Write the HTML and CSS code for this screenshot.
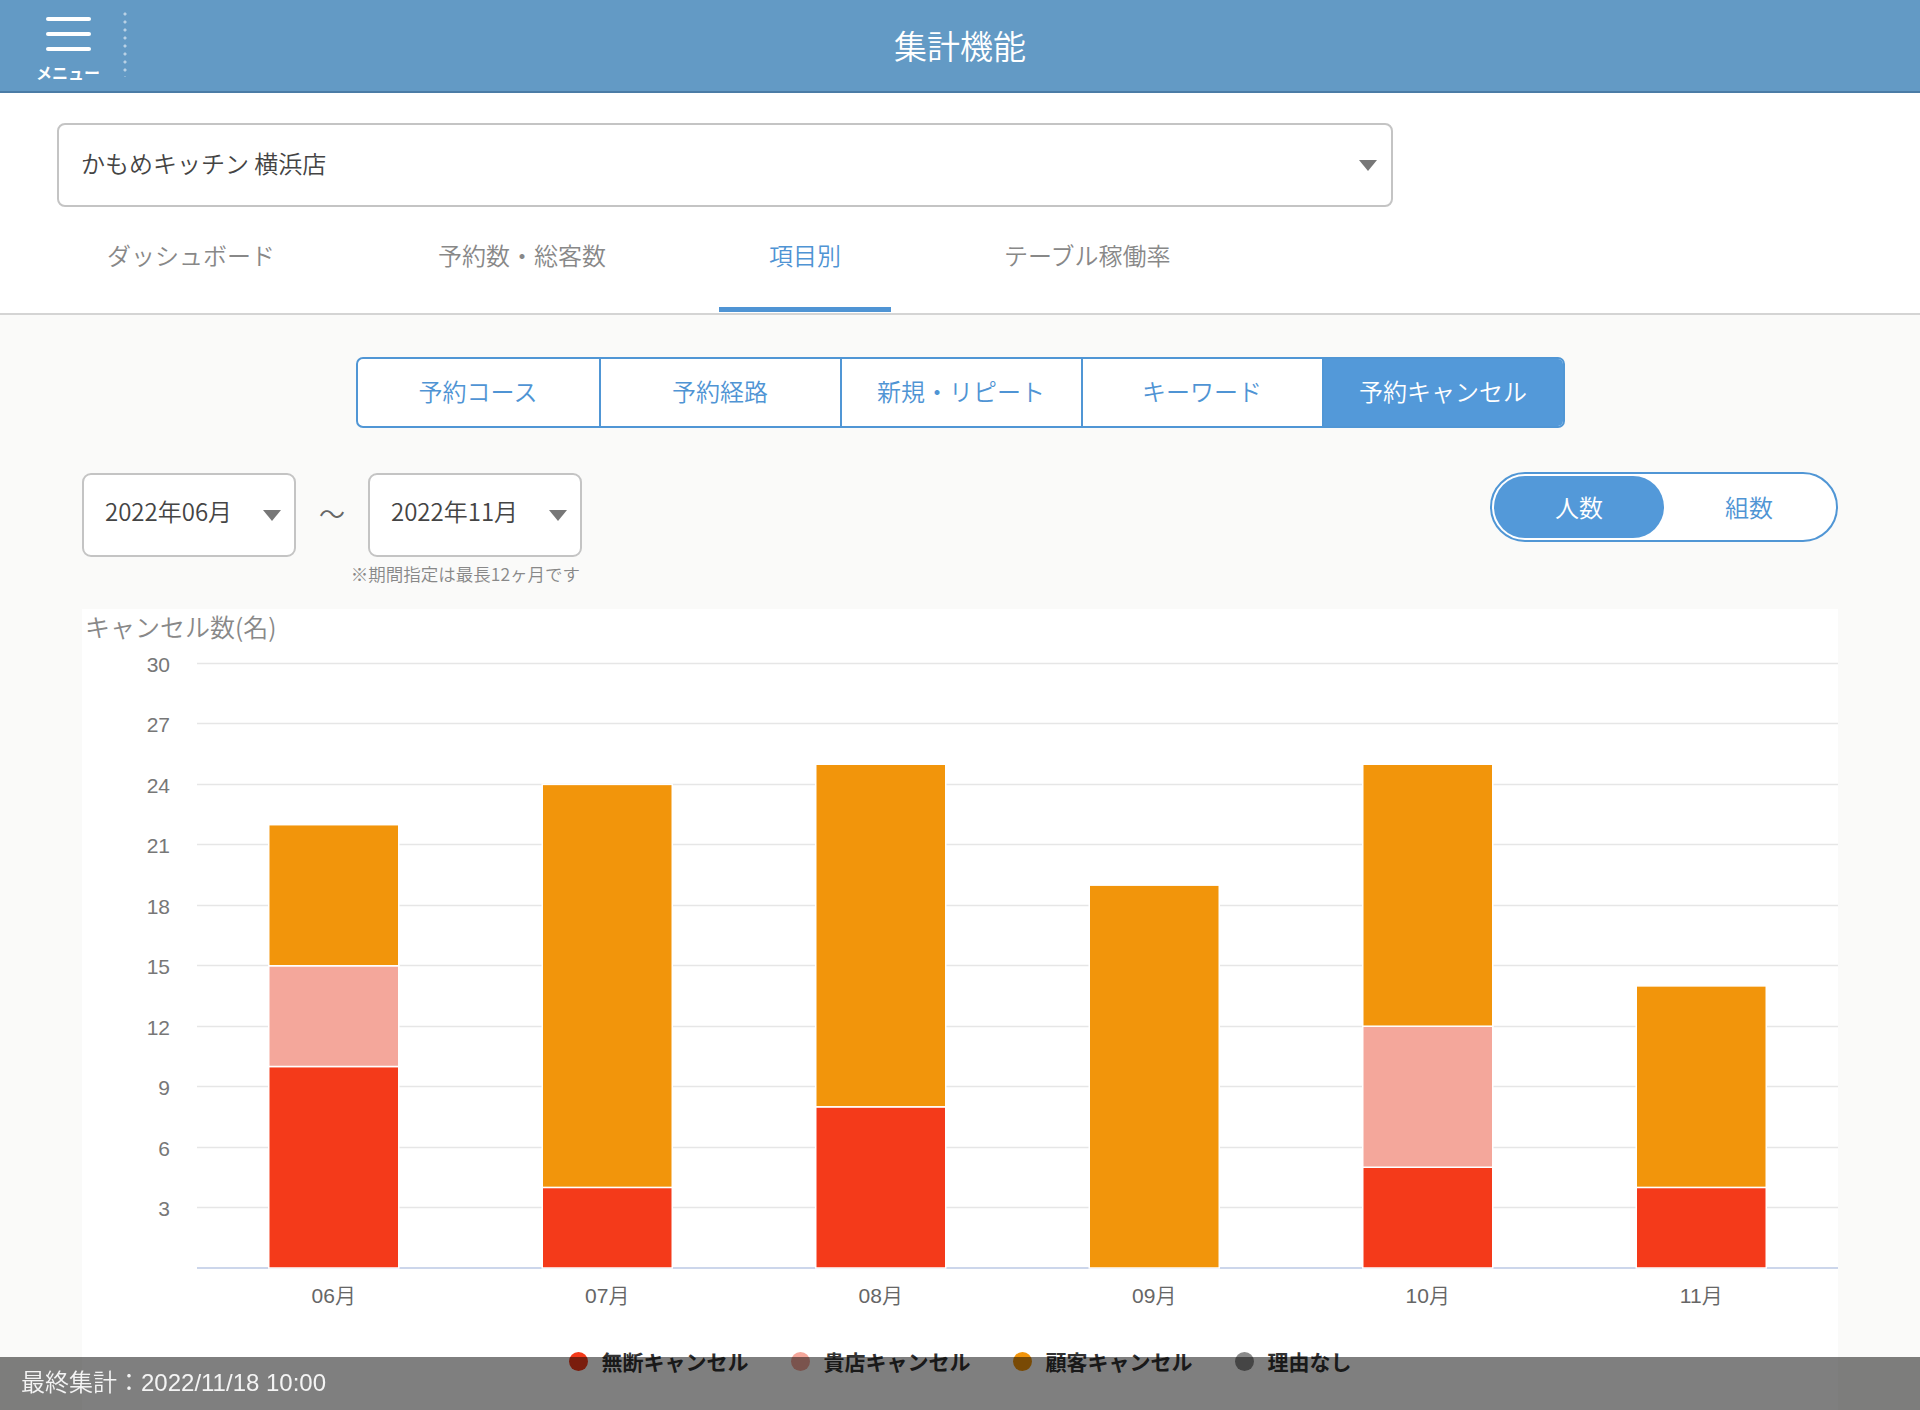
FILE: index.html
```html
<!DOCTYPE html>
<html lang="ja">
<head>
<meta charset="utf-8">
<title>集計機能</title>
<link rel="stylesheet" href="styles.css">
</head>
<body>
<header class="topbar">
  <div class="topbar-left">
    <div class="menu">
      <span class="burger"><i></i><i></i><i></i></span>
      <span class="menu-label">メニュー</span>
    </div>
    <div class="divider"></div>
  </div>
  <h1 class="title">集計機能</h1>
  <div></div>
</header>

<section class="top">
  <div class="store">
    <span>かもめキッチン 横浜店</span>
    <span class="caret"></span>
  </div>
  <nav class="tabs">
    <div class="tab">ダッシュボード</div>
    <div class="tab">予約数・総客数</div>
    <div class="tab active">項目別</div>
    <div class="tab">テーブル稼働率</div>
  </nav>
</section>

<main class="main">
  <div class="segments">
    <div class="seg">予約コース</div>
    <div class="seg">予約経路</div>
    <div class="seg">新規・リピート</div>
    <div class="seg">キーワード</div>
    <div class="seg active">予約キャンセル</div>
  </div>

  <div class="controls">
    <div class="range">
      <div class="range-row">
        <div class="date"><span>2022年06月</span><span class="caret"></span></div>
        <div class="tilde">〜</div>
        <div class="date"><span>2022年11月</span><span class="caret"></span></div>
      </div>
      <div class="note">※期間指定は最長12ヶ月です</div>
    </div>
    <div class="toggle">
      <span class="on">人数</span>
      <span>組数</span>
    </div>
  </div>

  <div class="chart">
    <svg class="plot" width="1756" height="730" viewBox="0 0 1756 730">
      <text class="ytitle" x="3" y="28">キャンセル数(名)</text>
      <g class="grid">
        <line x1="115" x2="1756" y1="54.5" y2="54.5"/>
        <line x1="115" x2="1756" y1="114.5" y2="114.5"/>
        <line x1="115" x2="1756" y1="175.5" y2="175.5"/>
        <line x1="115" x2="1756" y1="235.5" y2="235.5"/>
        <line x1="115" x2="1756" y1="296.5" y2="296.5"/>
        <line x1="115" x2="1756" y1="356.5" y2="356.5"/>
        <line x1="115" x2="1756" y1="417.5" y2="417.5"/>
        <line x1="115" x2="1756" y1="477.5" y2="477.5"/>
        <line x1="115" x2="1756" y1="538.5" y2="538.5"/>
        <line x1="115" x2="1756" y1="598.5" y2="598.5"/>
      </g>
      <g class="ylab">
        <text x="88" y="63">30</text>
        <text x="88" y="123">27</text>
        <text x="88" y="184">24</text>
        <text x="88" y="244">21</text>
        <text x="88" y="305">18</text>
        <text x="88" y="365">15</text>
        <text x="88" y="426">12</text>
        <text x="88" y="486">9</text>
        <text x="88" y="547">6</text>
        <text x="88" y="607">3</text>
      </g>
      <line class="axis" x1="115" x2="1756" y1="659" y2="659"/>
      <g class="bars">
        <rect class="c-red" x="186.75" y="457.5" width="130" height="201.5"/>
        <rect class="c-pink" x="186.75" y="356.75" width="130" height="100.75"/>
        <rect class="c-orange" x="186.75" y="215.7" width="130" height="141.05"/>

        <rect class="c-red" x="460.25" y="578.4" width="130" height="80.6"/>
        <rect class="c-orange" x="460.25" y="175.4" width="130" height="403"/>

        <rect class="c-red" x="733.75" y="497.8" width="130" height="161.2"/>
        <rect class="c-orange" x="733.75" y="155.25" width="130" height="342.55"/>

        <rect class="c-orange" x="1007.25" y="276.15" width="130" height="382.85"/>

        <rect class="c-red" x="1280.75" y="558.25" width="130" height="100.75"/>
        <rect class="c-pink" x="1280.75" y="417.2" width="130" height="141.05"/>
        <rect class="c-orange" x="1280.75" y="155.25" width="130" height="261.95"/>

        <rect class="c-red" x="1554.25" y="578.4" width="130" height="80.6"/>
        <rect class="c-orange" x="1554.25" y="376.9" width="130" height="201.5"/>
      </g>
      <g class="xlab">
        <text x="251.75" y="694">06月</text>
        <text x="525.25" y="694">07月</text>
        <text x="798.75" y="694">08月</text>
        <text x="1072.25" y="694">09月</text>
        <text x="1345.75" y="694">10月</text>
        <text x="1619.25" y="694">11月</text>
      </g>
    </svg>
    <div class="legend">
      <div class="legend-item"><span class="dot d-red"></span>無断キャンセル</div>
      <div class="legend-item"><span class="dot d-pink"></span>貴店キャンセル</div>
      <div class="legend-item"><span class="dot d-orange"></span>顧客キャンセル</div>
      <div class="legend-item"><span class="dot d-gray"></span>理由なし</div>
    </div>
  </div>
</main>

<footer class="footer">最終集計：2022/11/18 10:00</footer>
</body>
</html>
```

FILE: styles.css
```css
html, body {
  margin: 0;
  padding: 0;
}
body {
  background: #fafaf9;
  font-family: "Noto Sans CJK JP", "Noto Sans", sans-serif;
  font-weight: 350;
  color: #444;
  overflow: hidden;
}

/* header */
.topbar {
  display: grid;
  grid-template-columns: 1fr auto 1fr;
  align-items: center;
  height: 91px;
  background: #639ac5;
  border-bottom: 2px solid #4b7ca6;
  color: #fff;
}
.topbar-left {
  display: flex;
  align-items: flex-start;
  height: 100%;
}
.menu {
  margin-left: 33px;
  width: 70px;
  padding-top: 17px;
  display: flex;
  flex-direction: column;
  align-items: center;
}
.burger {
  display: flex;
  flex-direction: column;
  gap: 11px;
  width: 45px;
}
.burger i {
  display: block;
  height: 4px;
  background: #fff;
  border-radius: 2px;
}
.menu-label {
  margin-top: 11px;
  font-size: 16px;
  font-weight: bold;
  line-height: 20px;
}
.divider {
  margin: 10px 0 0 20px;
  width: 4px;
  height: 67px;
  background-image: radial-gradient(circle at center, rgba(255, 255, 255, 0.55) 1.3px, transparent 1.8px);
  background-size: 4px 8px;
}
.title {
  margin: 0;
  font-size: 33px;
  font-weight: 350;
  line-height: 1;
  color: #fff;
}

/* top white section */
.top {
  background: #fff;
  padding-top: 30px;
  border-bottom: 2px solid #d4d4d4;
}
.store {
  box-sizing: border-box;
  margin-left: 57px;
  width: 1336px;
  height: 84px;
  border: 2px solid #c4c4c4;
  border-radius: 8px;
  display: flex;
  align-items: center;
  justify-content: space-between;
  padding: 0 14px 6px 22px;
  font-size: 24px;
  color: #444;
}
.store .caret {
  margin-top: 6px;
}
.caret {
  width: 0;
  height: 0;
  border-left: 9px solid transparent;
  border-right: 9px solid transparent;
  border-top: 11px solid #777;
}
.tabs {
  display: flex;
  gap: 63px;
  padding-left: 57px;
  padding-bottom: 1px;
}
.tab {
  box-sizing: border-box;
  height: 105px;
  padding: 30px 50px 0;
  font-size: 24px;
  line-height: 36px;
  color: #888;
  border-bottom: 5px solid transparent;
}
.tab.active {
  color: #4f94d4;
  border-bottom-color: #4f94d4;
}

/* main */
.main {
  padding-top: 42px;
}
.segments {
  display: grid;
  grid-template-columns: repeat(5, 1fr);
  box-sizing: border-box;
  width: 1209px;
  height: 71px;
  margin: 0 auto;
  border: 2px solid #5096d5;
  border-radius: 7px;
  overflow: hidden;
  background: #fff;
}
.seg {
  display: flex;
  align-items: center;
  justify-content: center;
  padding-bottom: 5px;
  font-size: 24px;
  color: #4f94d4;
  border-left: 2px solid #5096d5;
}
.seg:first-child {
  border-left: 0;
}
.seg.active {
  background: #5399d9;
  color: #fff;
}

.controls {
  display: flex;
  justify-content: space-between;
  align-items: flex-start;
  margin-top: 45px;
  padding: 0 82px;
}
.range {
  display: flex;
  flex-direction: column;
}
.range-row {
  display: flex;
  align-items: center;
}
.date {
  box-sizing: border-box;
  width: 214px;
  height: 84px;
  border: 2px solid #c4c4c4;
  border-radius: 9px;
  background: #fff;
  display: flex;
  align-items: center;
  justify-content: space-between;
  padding: 0 13px 10px 21px;
  font-size: 24px;
  color: #444;
}
.date .caret {
  margin-top: 10px;
}
.tilde {
  width: 72px;
  text-align: center;
  font-size: 26px;
  color: #666;
  padding-bottom: 6px;
}
.note {
  align-self: flex-end;
  margin: 7px 2px 0 0;
  font-size: 17.5px;
  line-height: 20px;
  color: #888;
}
.toggle {
  display: flex;
  box-sizing: border-box;
  width: 348px;
  height: 70px;
  margin-top: -1px;
  border: 2px solid #5096d5;
  border-radius: 35px;
  padding: 2px;
  background: #fff;
}
.toggle span {
  flex: 1;
  display: flex;
  align-items: center;
  justify-content: center;
  padding-bottom: 2px;
  border-radius: 31px;
  font-size: 24px;
  color: #4f94d4;
}
.toggle .on {
  background: #5399d9;
  color: #fff;
}

/* chart */
.chart {
  margin: 25px 82px 0;
  background: #fff;
  padding-bottom: 40px;
}
.plot {
  display: block;
}
.ytitle {
  font-family: "Noto Sans CJK JP", sans-serif;
  font-size: 25px;
  fill: #888;
}
.grid line {
  stroke: #e6e6e6;
  stroke-width: 1.5;
}
.axis {
  stroke: #ccd6eb;
  stroke-width: 2;
}
.ylab text {
  font-family: "Liberation Sans", "Noto Sans CJK JP", sans-serif;
  font-size: 21px;
  fill: #777;
  text-anchor: end;
}
.xlab text {
  font-family: "Liberation Sans", "Noto Sans CJK JP", sans-serif;
  font-size: 21px;
  fill: #666;
  text-anchor: middle;
}
.bars rect {
  stroke: #fff;
  stroke-width: 1.5;
}
.c-red { fill: #f43a1a; }
.c-pink { fill: #f4a79b; }
.c-orange { fill: #f2950b; }

.legend {
  display: flex;
  justify-content: center;
  align-items: center;
  gap: 42px;
  height: 44px;
}
.legend-item {
  display: flex;
  align-items: center;
  gap: 14px;
  font-size: 21px;
  font-weight: bold;
  color: #333;
}
.dot {
  width: 19px;
  height: 19px;
  border-radius: 50%;
}
.d-red { background: #f43a1a; }
.d-pink { background: #f4a79b; }
.d-orange { background: #f2950b; }
.d-gray { background: #8a8a8a; }

/* footer overlay */
.footer {
  position: fixed;
  left: 0;
  right: 0;
  bottom: 0;
  height: 53px;
  line-height: 51px;
  padding-left: 21px;
  background: rgba(0, 0, 0, 0.5);
  color: #f4f4f4;
  font-family: "Liberation Sans", "Noto Sans CJK JP", sans-serif;
  font-size: 24px;
}
```
